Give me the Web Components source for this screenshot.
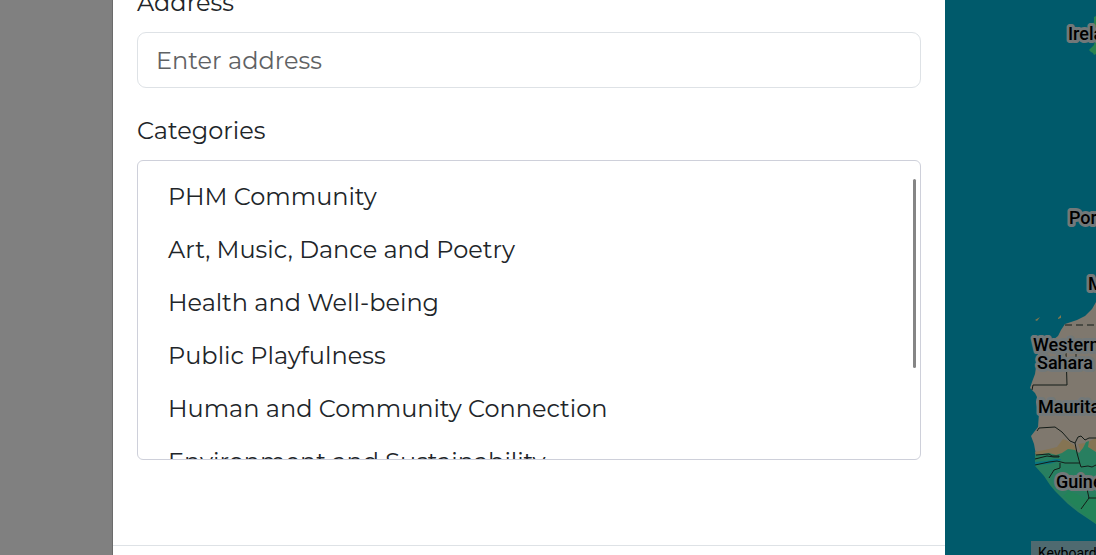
<!DOCTYPE html>
<html lang="en">
<head>
<meta charset="utf-8">
<meta name="viewport" content="width=device-width, initial-scale=1">
<title>Add entry</title>
<style>
html, body { height: 100%; }
body { margin: 0; overflow: hidden; background: #808080; color: #212529; font-family: Montserrat, Inter, "Open Sans", sans-serif; font-size: 24px; }
</style>
</head>
<body>
<page-shell>
  <form-dialog>
    <address-field label="Address" placeholder="Enter address"></address-field>
    <category-list label="Categories">
      <category-option>PHM Community</category-option>
      <category-option>Art, Music, Dance and Poetry</category-option>
      <category-option>Health and Well-being</category-option>
      <category-option>Public Playfulness</category-option>
      <category-option>Human and Community Connection</category-option>
      <category-option>Environment and Sustainability</category-option>
    </category-list>
  </form-dialog>
  <world-map slot="map"></world-map>
</page-shell>
<script>
function define(name, html, setup) {
  customElements.define(name, class extends HTMLElement {
    constructor() {
      super();
      this.attachShadow({ mode: 'open' }).innerHTML = html;
    }
    connectedCallback() { if (setup) setup(this, this.shadowRoot); }
  });
}

define('page-shell', `
<style>
:host { display: grid; grid-template-columns: 113px minmax(0, 1fr) 151px; height: 100vh; overflow: hidden; }
.edge { border-right: 1px solid #6b6b6b; }
</style>
<div class="edge"></div><slot></slot><slot name="map"></slot>`);

define('form-dialog', `
<style>
:host { display: flex; flex-direction: column; min-width: 0; overflow: hidden; background: #fff; }
form { display: flex; flex-direction: column; gap: 25px; flex: none; margin-top: -15px; padding: 0 24px 85px; }
footer { flex: 1; border-top: 1px solid #dee2e6; }
</style>
<form><slot></slot></form><footer></footer>`);

define('address-field', `
<style>
:host { display: flex; flex-direction: column; gap: 11px; }
label { line-height: 36px; }
input { box-sizing: border-box; width: 100%; height: 56px; padding: 0 18px; border: 1px solid #dee2e6; border-radius: 9px; background: #fff; color: inherit; font: inherit; }
input::placeholder { color: #5f6264; opacity: 1; }
</style>
<label for="field"></label><input id="field" type="text">`, (host, root) => {
  root.querySelector('label').textContent = host.getAttribute('label');
  root.querySelector('input').placeholder = host.getAttribute('placeholder');
});

define('category-list', `
<style>
:host { display: flex; flex-direction: column; gap: 11px; }
#title { line-height: 36px; }
.frame { position: relative; box-sizing: border-box; height: 300px; border: 1px solid #ced0da; border-radius: 6px; overflow: hidden; }
.items { box-sizing: border-box; height: 100%; padding: 9px 12px; overflow-y: auto; scrollbar-width: none; }
.thumb { position: absolute; top: 18px; right: 4px; width: 3px; height: 189px; border-radius: 2px; background: #858585; }
</style>
<div id="title"></div>
<div class="frame">
  <div class="items" role="listbox" aria-labelledby="title" aria-multiselectable="true" tabindex="0"><slot></slot></div>
  <div class="thumb"></div>
</div>`, (host, root) => {
  root.querySelector('#title').textContent = host.getAttribute('label');
});

define('category-option', `
<style>
:host { display: block; padding: 8px 18px; line-height: 37px; cursor: pointer; white-space: nowrap; }
</style>
<slot></slot>`, host => {
  host.setAttribute('role', 'option');
  host.setAttribute('aria-selected', 'false');
});

define('world-map', `
<style>
:host { display: block; position: relative; overflow: hidden; background: #005a6b; font-family: Roboto, sans-serif; }
svg { display: block; }
text { font-size: 18px; font-weight: 500; fill: #000; stroke: #727879; stroke-width: 6px; stroke-linejoin: round; paint-order: stroke; }
.line { fill: none; stroke: #141c18; stroke-width: 1; }
button { position: absolute; left: 86px; top: 541px; padding: 4px 7px; border: 0; background: #4f6a70; color: #000; font: 14px/16px Roboto, sans-serif; white-space: nowrap; }
</style>
<svg width="151" height="555" viewBox="945 0 151 555" aria-label="Map">
  <path fill="#29824f" d="M1096 16l-2 1 0 5-2 5 0 10 3 2-1 6-3 3-2 2 2 2 2 1 1 2 2-1z"/>
  <path fill="#7f786e" d="M1096 302l-4 7-7 7-8 4-12 4-4 6-3 6-5 4-8 2-5 4-3 14-2 14-3 8-2 6 5 5 2 4-1 5 1 5 2 6-1 14-7 9 3 8 2 11 61 25z"/>
  <path fill="#857453" d="M1035 452l14-3 8-2 6-8 5 2 7 5 3 10-25 4-17-3z"/>
  <path fill="#857453" d="M1078 444l8-1 10-5v13l-14 4z"/>
  <path fill="#287f60" d="M1035 455l14-2 7 2 6-2 6-4 7 1 4 3 4-5 3-6 3-1-1 6 8 5v72l-9-6-9-6-10-8-6-6-7-7-5-6-6-9-9-10z"/>
  <path fill="#238359" d="M1069 491l10 4 8 4 9-5v30l-13-10-20-18z"/>
  <path fill="#0a7580" d="M1035 462l12-1 8-2 6 0-1 2-11 3-14 1z"/>
  <path fill="#81774f" d="M1035 320l5-3-3 4zm23-2l3-3 0 3-3 1z"/>
  <path class="line" stroke-dasharray="7 4" d="M1065 325h31"/>
  <path class="line" d="M1032 390l1-5h34l-1-32M1076 354v3M1037 431l2-3 16-1 7 5 8 9 5 2 3-6 3-1 4 4 4-2 7 0M1075 443l2 10 3 11 1 3 7-1 4 1 4-2M1036 455l13-1 3 2 7 0 0 1-5 0-7-1-12 3M1035 465l14-3 8-1 8 2h15M1060 463v5l-6 2-5 8M1087 489l2 9-8 11M1088 498h8"/>
  <text x="1068" y="40">Ireland</text>
  <text x="1069" y="224">Portugal</text>
  <text x="1088" y="290">Morocco</text>
  <text x="1033" y="351">Western</text>
  <text x="1037" y="369">Sahara</text>
  <text x="1038" y="413">Mauritania</text>
  <text x="1056" y="488">Guinea</text>
</svg>
<button type="button">Keyboard shortcuts</button>`);
</script>
</body>
</html>
